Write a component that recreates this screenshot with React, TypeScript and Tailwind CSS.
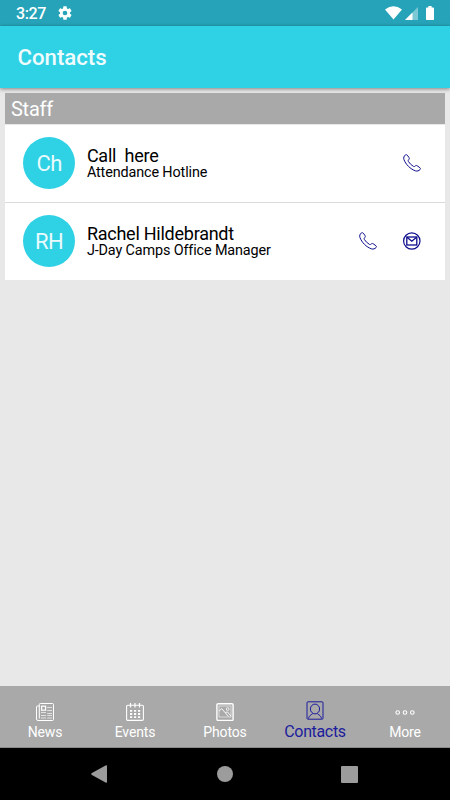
import type { ReactNode } from 'react'

interface Contact {
  initials: string
  name: string
  role: string
  email?: boolean
}

const contacts: Contact[] = [
  { initials: 'Ch', name: 'Call  here', role: 'Attendance Hotline' },
  { initials: 'RH', name: 'Rachel Hildebrandt', role: 'J-Day Camps Office Manager', email: true },
]

function PhoneIcon() {
  return (
    <svg width="18" height="18" viewBox="0 0 18 18" fill="none" stroke="#0c0c8c" strokeWidth="1">
      <path d="M2.2 1.1C2.9.5 3.7.5 4.3 1.2L6 3.6C6.5 4.3 6.3 5 5.8 5.5C5.1 6.1 5 6.8 5.4 7.5C6.6 9.4 8.3 11.1 10.3 12.3C11 12.7 11.7 12.6 12.2 12C12.8 11.4 13.5 11.3 14.2 11.8L16.9 13.7C17.6 14.3 17.6 15 17 15.6C15.9 16.8 14.3 17.4 12.6 16.9C7.3 15.1 2.7 10.4.9 5.4C.4 3.6.9 2.2 2.2 1.1Z" />
    </svg>
  )
}

function MailIcon() {
  return (
    <svg width="18" height="18" viewBox="0 0 18 18" fill="none" stroke="#0c0c8c">
      <circle cx="8.8" cy="9" r="8.2" strokeWidth="1.2" />
      <rect x="3.8" y="5" width="10" height="8" strokeWidth="1.3" />
      <path d="M4 5.3L8.8 9.2L13.6 5.3" strokeWidth="1.3" />
    </svg>
  )
}

function NewsIcon() {
  return (
    <svg width="18" height="18" viewBox="0 0 18 18" fill="none" stroke="#fff" strokeWidth="1">
      <path d="M3.3 15.5V1.5Q3.3.5 4.3.5H16.5Q17.5.5 17.5 1.5V16.5Q17.5 17.5 16.5 17.5H2Q.5 17.5.5 16V4Q.5 3 1.5 3H3.3" />
      <rect x="5.6" y="3.2" width="4" height="4" strokeWidth="1.2" />
      <path d="M11.2 4.5H16M11.2 7.5H16M5 9.5H10M11.2 10.5H16M5 12.5H10M11.2 12.5H16M5 15H10M11.2 15H16" opacity=".65" />
    </svg>
  )
}

function EventsIcon() {
  return (
    <svg width="18" height="18" viewBox="0 0 18 18" fill="none" stroke="#fff">
      <rect x=".6" y="2.2" width="16.8" height="15.2" rx="1.2" strokeWidth="1.1" />
      <path d="M4.5 0V4.5M9 0V4.5M13.5 0V4.5" strokeWidth="1.2" />
      <path d="M4 7.8H14.2M4 11H14.2M4 14.2H14.2" strokeWidth="1.8" strokeDasharray="2.2 1.8" />
    </svg>
  )
}

function PhotosIcon() {
  return (
    <svg width="18" height="18" viewBox="0 0 18 18" fill="none" stroke="#fff">
      <rect x=".9" y=".7" width="16.2" height="16.7" rx="1.2" strokeWidth="1.4" />
      <rect x="3" y="3" width="12" height="11" strokeWidth=".7" opacity=".8" />
      <path d="M3 8.2L5.7 5.6L12.5 13.5M9.3 9.8L11.3 8.8L15 13" strokeWidth=".9" />
      <circle cx="11.7" cy="6.1" r="1.4" strokeWidth=".8" />
    </svg>
  )
}

function ContactsIcon() {
  return (
    <svg width="18" height="19" viewBox="0 0 18 19" fill="none" stroke="#1c1c9c" strokeWidth="1">
      <rect x="1" y=".8" width="16" height="17.4" rx="1" />
      <ellipse cx="9" cy="8" rx="4.6" ry="4.9" />
      <path d="M2.5 17.5C3 14.8 4.5 14.4 6.8 12.5M15.5 17.5C15 14.8 13.5 14.4 11.2 12.5" />
    </svg>
  )
}

function MoreIcon() {
  return (
    <svg width="20" height="18" viewBox="0 0 20 18" fill="none" stroke="#fff" strokeWidth="1.1">
      <circle cx="2.7" cy="9.5" r="1.8" />
      <circle cx="10" cy="9.5" r="1.8" />
      <circle cx="17.3" cy="9.5" r="1.8" />
    </svg>
  )
}

function StatusBar() {
  return (
    <header className="h-[26px] shrink-0 flex items-center bg-[#26a3b9] text-white px-4">
      <span className="w-[30px] text-[16px] leading-[26px] tracking-[-0.4px] font-medium pt-[2px]">3:27</span>
      <svg className="ml-[11px]" width="16" height="16" viewBox="0 0 24 24" fill="#fff">
        <path d="M19.43 12.98c.04-.32.07-.64.07-.98s-.03-.66-.07-.98l2.11-1.65c.19-.15.24-.42.12-.64l-2-3.46c-.12-.22-.39-.3-.61-.22l-2.49 1c-.52-.4-1.08-.73-1.69-.98l-.38-2.65A.49.49 0 0 0 14 2h-4c-.25 0-.46.18-.49.42l-.38 2.65c-.61.25-1.17.59-1.69.98l-2.49-1c-.23-.09-.49 0-.61.22l-2 3.46c-.13.22-.07.49.12.64l2.11 1.65c-.04.32-.07.65-.07.98s.03.66.07.98l-2.11 1.65c-.19.15-.24.42-.12.64l2 3.46c.12.22.39.3.61.22l2.49-1c.52.4 1.08.73 1.69.98l.38 2.65c.03.24.24.42.49.42h4c.25 0 .46-.18.49-.42l.38-2.65c.61-.25 1.17-.59 1.69-.98l2.49 1c.23.09.49 0 .61-.22l2-3.46c.12-.22.07-.49-.12-.64l-2.11-1.65zM12 15.5a3.5 3.5 0 1 1 0-7 3.5 3.5 0 0 1 0 7z" />
      </svg>
      <svg className="ml-auto" width="17" height="14" viewBox="0 0 17 14" fill="#fff">
        <path d="M0 3.4Q8.5-2.9 17 3.4L8.5 13.5Z" />
      </svg>
      <svg className="ml-[3px] mt-px" width="13" height="13" viewBox="0 0 13 13" fill="#fff">
        <path d="M0 13L13 0V13Z" opacity=".4" />
        <path d="M0 13L7.5 5.5V13Z" />
      </svg>
      <svg className="ml-[8px]" width="8" height="14" viewBox="0 0 8 14" fill="#fff">
        <path d="M2.4 0H5.6V1.5H7.3Q8 1.5 8 2.2V13.3Q8 14 7.3 14H.7Q0 14 0 13.3V2.2Q0 1.5.7 1.5H2.4Z" />
      </svg>
    </header>
  )
}

function ContactRow({ contact }: { contact: Contact }) {
  return (
    <li className="h-[77px] box-content flex items-center bg-white pl-[18px] pr-[23.5px]">
      <div className="-mt-px size-[51.5px] rounded-full bg-[#2fd1e5] text-[#e9fbfd] text-[22px] tracking-[-0.5px] flex items-center justify-center">
        {contact.initials}
      </div>
      <div className="-mt-px ml-[12px] text-black whitespace-pre">
        <p className="text-[18px] leading-[19px] tracking-[-0.25px]">{contact.name}</p>
        <p className="text-[14.4px] leading-[15px] tracking-[-0.13px]">{contact.role}</p>
      </div>
      <div className="-mt-px ml-auto flex gap-[26px]">
        <PhoneIcon />
        {contact.email && <MailIcon />}
      </div>
    </li>
  )
}

function Tab({ label, icon, active }: { label: string; icon: ReactNode; active?: boolean }) {
  return (
    <button
      className={
        active
          ? 'flex-1 basis-0 flex flex-col items-center pt-[15px] text-[16px] tracking-[-0.35px] text-[#1c1c9c]'
          : 'flex-1 basis-0 flex flex-col items-center pt-[17px] text-[14px] tracking-[-0.15px] text-white'
      }
    >
      {icon}
      <span className={active ? 'leading-[23px]' : 'leading-[22px]'}>{label}</span>
    </button>
  )
}

export default function App() {
  return (
    <div className="w-[450px] h-[800px] flex flex-col overflow-hidden bg-[#e8e8e8] font-[Roboto,sans-serif]">
      <StatusBar />
      <div className="h-[62px] shrink-0 flex items-center bg-[#2fd1e5] pl-[17.5px] shadow-[0_1px_4px_rgba(0,0,0,0.45)]">
        <h1 className="text-[22.2px] font-medium text-[#effcfd] pt-[2px]">Contacts</h1>
      </div>
      <main className="flex-1 px-[5.4px] pt-[5px]">
        <h2 className="h-[31px] bg-[#a9a9a9] text-white text-[20px] leading-[32px] tracking-[-0.2px] pl-[5.5px]">Staff</h2>
        <ul className="mt-px flex flex-col divide-y divide-[#dadada]">
          {contacts.map((contact) => (
            <ContactRow key={contact.initials} contact={contact} />
          ))}
        </ul>
      </main>
      <nav className="h-[62px] shrink-0 flex items-stretch bg-[#a9a9a9] border-b border-[#8a8a8a]">
        <Tab label="News" icon={<NewsIcon />} />
        <Tab label="Events" icon={<EventsIcon />} />
        <Tab label="Photos" icon={<PhotosIcon />} />
        <Tab label="Contacts" icon={<ContactsIcon />} active />
        <Tab label="More" icon={<MoreIcon />} />
      </nav>
      <footer className="h-[52px] shrink-0 flex items-center justify-between bg-black pl-[91px] pr-[92px]">
        <svg width="17" height="18" viewBox="0 0 17 18" fill="#9c9c9c">
          <path d="M.5 8.2Q0 9 .5 9.8L15 17.8Q16 18 16 17V1Q16 0 15 .2Z" />
        </svg>
        <div className="size-4 rounded-full bg-[#9c9c9c]" />
        <div className="size-[17px] rounded-[1px] bg-[#9c9c9c]" />
      </footer>
    </div>
  )
}
